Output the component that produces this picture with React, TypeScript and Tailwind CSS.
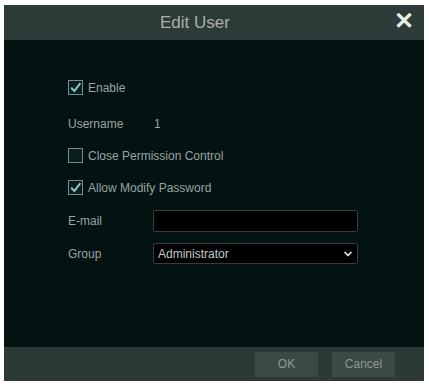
import { ChevronDown } from "lucide-react";

function Check({ checked, label }: { checked: boolean; label: string }) {
  return (
    <div className="flex h-[15px] items-center gap-[5px]">
      <div className="flex h-[15px] w-[15px] items-center justify-center border border-[#6f8f90] bg-[#0b1d1d]">
        {checked && (
          <svg viewBox="0 0 12 12" className="h-[13px] w-[13px]">
            <path d="M2 6.2 L5 9.2 L10.5 2" fill="none" stroke="#8fc3c6" strokeWidth="1.8" />
          </svg>
        )}
      </div>
      <span>{label}</span>
    </div>
  );
}

export default function App() {
  return (
    <div className="h-[384px] w-[429px] bg-white p-[5px_5px_3px_4px] font-['Liberation_Sans',Arial,sans-serif]">
      <div className="flex h-full flex-col">
        <div className="relative flex h-[35px] items-center justify-center bg-[#2d3b38] pr-[38px]">
          <span className="text-[17px] text-[#a7b0ae]">Edit User</span>
          <span className="absolute right-[10px] top-[4px] text-[24px] font-bold leading-none text-[#e8ecea]">✕</span>
        </div>
        <div className="flex flex-1 flex-col bg-[#021312] pl-[64px] pt-[40px] text-[12px] text-[#9aa4a2]">
          <Check checked label="Enable" />
          <div className="mt-[21px] flex h-[15px] items-center">
            <span className="w-[86px]">Username</span>
            <span>1</span>
          </div>
          <div className="mt-[17px]">
            <Check checked={false} label="Close Permission Control" />
          </div>
          <div className="mt-[17px]">
            <Check checked label="Allow Modify Password" />
          </div>
          <div className="mt-[15px] flex items-center">
            <span className="w-[85px]">E-mail</span>
            <div className="h-[22px] w-[205px] rounded-[2px] border border-[#33403f] bg-[#000000]" />
          </div>
          <div className="mt-[11px] flex items-center">
            <span className="w-[85px]">Group</span>
            <div className="flex h-[21px] w-[205px] items-center justify-between rounded-[2px] border border-[#33403f] bg-[#000000] pl-[4px] pr-[3px] text-[#c3cac9]">
              <span>Administrator</span>
              <ChevronDown className="h-[12px] w-[12px] text-[#e0e4e3]" strokeWidth={3.5} />
            </div>
          </div>
        </div>
        <div className="flex h-[34px] items-center justify-end gap-[14px] bg-[#2c3a37] pr-[29px] text-[12px] text-[#8f9a98]">
          <div className="flex h-[25px] w-[63px] items-center justify-center bg-[#3a4a47]">OK</div>
          <div className="flex h-[25px] w-[63px] items-center justify-center bg-[#3a4a47]">Cancel</div>
        </div>
      </div>
    </div>
  );
}
